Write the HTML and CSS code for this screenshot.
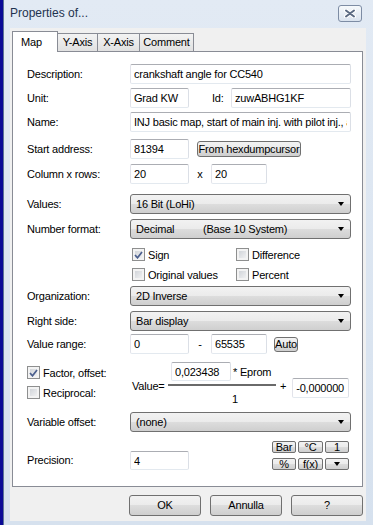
FILE: index.html
```html
<!DOCTYPE html>
<html lang="en">
<head>
    <meta charset="UTF-8">
    <meta name="viewport" content="width=device-width, initial-scale=1.0">
    <title>Properties of...</title>
    <link rel="stylesheet" href="styles.css">
</head>
<body>
    <div class="desk"></div>

    <div class="window">
        <!-- title bar -->
        <div class="titlebar">
            <span class="title">Properties of...</span>
            <span class="close">
                <svg width="12" height="9" viewBox="0 0 12 9">
                    <path d="M2 1.5 L10 7.5 M10 1.5 L2 7.5" stroke="#ffffff" stroke-width="4" stroke-linecap="round"/>
                    <path d="M2 1.5 L10 7.5 M10 1.5 L2 7.5" stroke="#5b6a82" stroke-width="2" stroke-linecap="round"/>
                </svg>
            </span>
        </div>

        <div class="client">
            <div class="tabs">
                <div class="tab active">Map</div>
                <div class="tab tab-y">Y-Axis</div>
                <div class="tab tab-x">X-Axis</div>
                <div class="tab tab-c">Comment</div>
            </div>

            <div class="panel">
                <div class="row">
                    <span class="lbl">Description:</span>
                    <input class="tb grow" type="text" value="crankshaft angle for CC540">
                </div>
                <div class="row sp4">
                    <span class="lbl">Unit:</span>
                    <input class="tb w59" type="text" value="Grad KW">
                    <span class="id-lbl">Id:</span>
                    <input class="tb grow" type="text" value="zuwABHG1KF">
                </div>
                <div class="row sp4">
                    <span class="lbl">Name:</span>
                    <input class="tb grow" type="text" value="INJ basic map, start of main inj. with pilot inj., after">
                </div>
                <div class="row sp7">
                    <span class="lbl">Start address:</span>
                    <input class="tb w59" type="text" value="81394">
                    <button class="btn hexdump">From hexdumpcursor</button>
                </div>
                <div class="row sp5">
                    <span class="lbl">Column x rows:</span>
                    <input class="tb w59" type="text" value="20">
                    <span class="sep">x</span>
                    <input class="tb w56" type="text" value="20">
                </div>

                <div class="row sp10">
                    <span class="lbl">Values:</span>
                    <div class="combo"><span>16 Bit (LoHi)</span><span class="arrow"></span></div>
                </div>
                <div class="row sp5">
                    <span class="lbl">Number format:</span>
                    <div class="combo"><span class="fmt-name">Decimal</span><span>(Base 10 System)</span><span class="arrow"></span></div>
                </div>

                <div class="checks sp8">
                    <label class="check"><span class="cb">
                        <svg width="9" height="8" viewBox="0 0 9 8"><path d="M1 4 L3.5 6.8 L8 1" fill="none" stroke="#4b5f8e" stroke-width="1.7"/></svg>
                    </span>Sign</label>
                    <label class="check"><span class="cb"></span>Difference</label>
                    <label class="check"><span class="cb"></span>Original values</label>
                    <label class="check"><span class="cb"></span>Percent</label>
                </div>

                <div class="row sp4">
                    <span class="lbl">Organization:</span>
                    <div class="combo"><span>2D Inverse</span><span class="arrow"></span></div>
                </div>
                <div class="row sp5">
                    <span class="lbl">Right side:</span>
                    <div class="combo"><span>Bar display</span><span class="arrow"></span></div>
                </div>
                <div class="row sp3">
                    <span class="lbl">Value range:</span>
                    <input class="tb w59" type="text" value="0">
                    <span class="sep">-</span>
                    <input class="tb w56" type="text" value="65535">
                    <button class="btn auto">Auto</button>
                </div>

                <!-- factor / offset formula -->
                <div class="factor sp8">
                    <div class="fo-checks">
                        <label class="check"><span class="cb">
                            <svg width="9" height="8" viewBox="0 0 9 8"><path d="M1 4 L3.5 6.8 L8 1" fill="none" stroke="#4b5f8e" stroke-width="1.7"/></svg>
                        </span>Factor, offset:</label>
                        <label class="check"><span class="cb"></span>Reciprocal:</label>
                    </div>
                    <div class="formula">
                        <span class="eq">Value=</span>
                        <div class="frac">
                            <div class="num">
                                <input class="tb w60" type="text" value="0,023438">
                                <span class="eprom">* Eprom</span>
                            </div>
                            <div class="bar"></div>
                            <div class="den">1</div>
                        </div>
                        <span class="plus">+</span>
                        <input class="tb w57 offs" type="text" value="-0,000000">
                    </div>
                </div>

                <div class="row sp6">
                    <span class="lbl">Variable offset:</span>
                    <div class="combo"><span>(none)</span><span class="arrow"></span></div>
                </div>

                <div class="prec sp9">
                    <span class="lbl">Precision:</span>
                    <input class="tb w59" type="text" value="4">
                    <div class="units">
                        <button class="btn unit">Bar</button>
                        <button class="btn unit">°C</button>
                        <button class="btn unit">1</button>
                        <button class="btn unit">%</button>
                        <button class="btn unit">f(x)</button>
                        <button class="btn unit"><span class="arrow"></span></button>
                    </div>
                </div>
            </div>

            <div class="actions">
                <button class="btn big">OK</button>
                <button class="btn big">Annulla</button>
                <button class="btn big">?</button>
            </div>
        </div>
    </div>
</body>
</html>
```

FILE: styles.css
```css
body {
    margin: 0;
    display: flex;
    height: 525px;
    overflow: hidden;
    font-family: "Liberation Sans", Arial, sans-serif;
    font-size: 11px;
    letter-spacing: -0.2px;
    color: #000;
    background: #0a0a96;
}

.desk {
    width: 3px;
    flex: none;
    background: #0a0a96;
}

.window {
    flex: 1;
    min-width: 0;
    display: flex;
    flex-direction: column;
    border-left: 1px solid #5d7495;
    background: linear-gradient(#e2eaf4, #d6e1ee);
}

/* title bar */
.titlebar {
    height: 28px;
    flex: none;
    display: flex;
    align-items: flex-start;
    justify-content: space-between;
    padding: 0 11px 0 6px;
}

.title {
    margin-top: 5px;
    font-size: 12px;
    line-height: 16px;
    letter-spacing: 0;
    color: #1f3350;
}

.close {
    width: 22px;
    height: 15px;
    margin-top: 5px;
    display: flex;
    align-items: center;
    justify-content: center;
    border: 1px solid #7d8ca4;
    border-radius: 3px;
    background: linear-gradient(#f6f9fc, #dae3ee);
}

.client {
    flex: 1;
    min-width: 0;
    margin: 0 7px 4px 6px;
    padding: 3px 3px 0 2px;
    background: #f0f0f0;
}

/* tabs */
.tabs {
    display: flex;
    align-items: flex-end;
    height: 20px;
}

.tab {
    height: 18px;
    box-sizing: border-box;
    margin-left: -1px;
    border: 1px solid #898c95;
    border-bottom: none;
    background: linear-gradient(#f3f3f3, #e1e1e1);
    line-height: 17px;
    text-align: center;
}

.tab.active {
    position: relative;
    z-index: 1;
    width: 46px;
    height: 21px;
    margin-left: 0;
    margin-bottom: -1px;
    padding-left: 8px;
    background: #fff;
    line-height: 20px;
    text-align: left;
}

.tab-y { width: 41px; }
.tab-x { width: 43px; }
.tab-c { width: 55px; }

/* main panel */
.panel {
    background: #fff;
    border: 1px solid #898c95;
    padding: 12px 11px 16px 14px;
}

.row {
    display: flex;
    align-items: center;
    height: 20px;
}

.lbl {
    width: 103px;
    flex: none;
}

.sp3 { margin-top: 3px; }
.sp4 { margin-top: 4px; }
.sp5 { margin-top: 5px; }
.sp6 { margin-top: 6px; }
.sp7 { margin-top: 7px; }
.sp8 { margin-top: 8px; }
.sp9 { margin-top: 9px; }
.sp10 { margin-top: 10px; }

.tb {
    height: 20px;
    box-sizing: border-box;
    flex: none;
    margin: 0;
    padding: 0 3px;
    border: 1px solid;
    border-color: #abadb3 #dbdfe6 #e3e9ef #e2e3ea;
    border-radius: 2px;
    background: #fff;
    font: inherit;
    letter-spacing: inherit;
    color: #000;
    outline: none;
}

.tb.grow { flex: 1; width: 0; min-width: 0; }
.w56 { width: 56px; }
.w57 { width: 57px; }
.w59 { width: 59px; }
.w60 { width: 60px; }

.id-lbl {
    width: 19px;
    margin-left: 23px;
}

.sep {
    width: 22px;
    text-align: center;
}

.btn {
    box-sizing: border-box;
    margin: 0;
    padding: 0;
    border: 1px solid #707070;
    border-radius: 3px;
    background: linear-gradient(#f2f2f2, #ebebeb 50%, #dddddd 50%, #cfcfcf);
    font: inherit;
    letter-spacing: inherit;
    color: #000;
    text-align: center;
}

.hexdump {
    width: 104px;
    height: 16px;
    margin-left: 8px;
    line-height: 14px;
}

.auto {
    width: 24px;
    height: 15px;
    margin-left: 7px;
    line-height: 13px;
}

.combo {
    flex: 1;
    min-width: 0;
    height: 20px;
    box-sizing: border-box;
    display: flex;
    align-items: center;
    padding-left: 5px;
    border: 1px solid #707070;
    border-radius: 3px;
    background: linear-gradient(#f2f2f2, #ebebeb 50%, #dddddd 50%, #cfcfcf);
}

.fmt-name {
    width: 67px;
}

.arrow {
    width: 0;
    height: 0;
    margin-left: auto;
    margin-right: 6px;
    border-top: 4px solid #000;
    border-left: 3.5px solid transparent;
    border-right: 3.5px solid transparent;
}

/* checkboxes */
.checks {
    display: grid;
    grid-template-columns: 104px 1fr;
    row-gap: 5px;
    margin-left: 105px;
}

.check {
    display: flex;
    align-items: center;
    gap: 3px;
    height: 15px;
}

.cb {
    width: 13px;
    height: 13px;
    box-sizing: border-box;
    flex: none;
    display: flex;
    align-items: center;
    justify-content: center;
    border: 1px solid #8e8f8f;
    background: linear-gradient(135deg, #c9cdd3, #f8f8f8);
    box-shadow: inset 0 0 0 2px #f3f3f3;
}

/* factor / offset */
.factor {
    display: flex;
    height: 44px;
}

.fo-checks {
    width: 103px;
    flex: none;
    display: flex;
    flex-direction: column;
    gap: 5px;
    padding-top: 3px;
}

.formula {
    display: flex;
    align-items: flex-start;
    margin-left: 2px;
}

.eq {
    width: 36px;
    margin-top: 17px;
    line-height: 14px;
}

.frac {
    width: 108px;
    display: flex;
    flex-direction: column;
}

.num {
    display: flex;
    align-items: center;
    padding-left: 3px;
}

.num .tb {
    height: 19px;
}

.eprom {
    margin-left: 2px;
}

.bar {
    height: 2px;
    margin-top: 3px;
    background: #6a6a6a;
}

.den {
    margin-top: 6px;
    padding-left: 64px;
    line-height: 14px;
}

.plus {
    margin: 17px 0 0 4px;
    line-height: 14px;
}

.offs {
    margin: 16px 0 0 6px;
}

/* precision + unit buttons */
.prec {
    display: flex;
    align-items: flex-end;
}

.prec .lbl {
    line-height: 20px;
}

.prec .tb {
    height: 19px;
}

.units {
    display: grid;
    grid-template-columns: 24px 25px 24px;
    grid-auto-rows: 12px;
    column-gap: 2px;
    row-gap: 5px;
    margin-left: auto;
    margin-right: 2px;
}

.unit {
    height: 12px;
    display: flex;
    align-items: center;
    justify-content: center;
    border-radius: 2px;
    line-height: 10px;
    overflow: hidden;
}

.unit .arrow {
    margin: 0;
}

/* bottom buttons */
.actions {
    display: flex;
    justify-content: flex-end;
    gap: 9px;
    margin-top: 8px;
}

.big {
    width: 72px;
    height: 21px;
    line-height: 19px;
}
```
